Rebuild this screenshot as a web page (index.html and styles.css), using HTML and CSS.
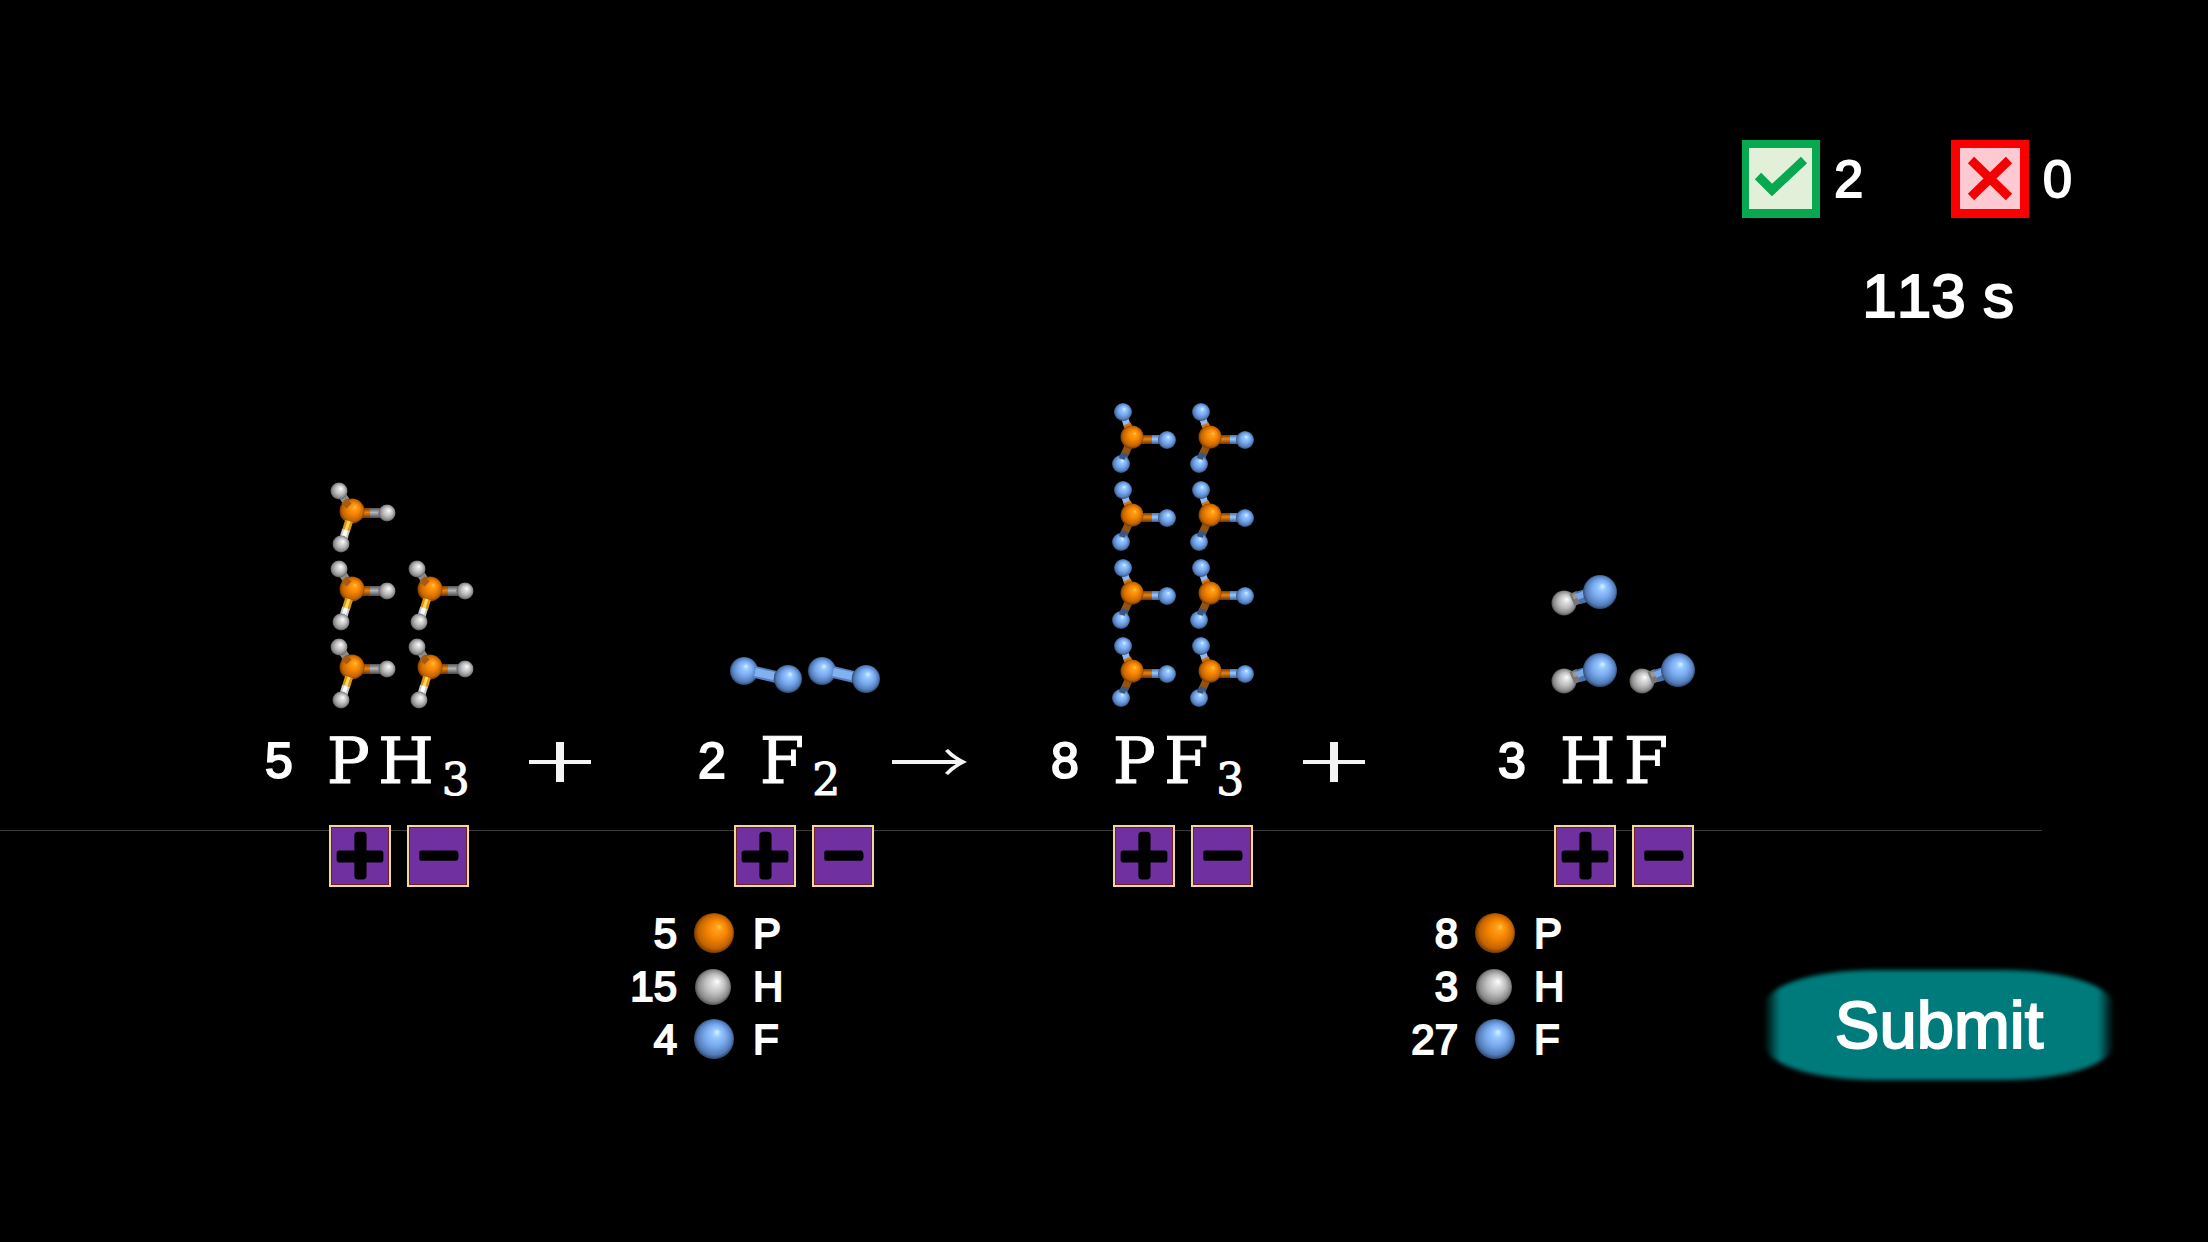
FILE: index.html
```html
<!DOCTYPE html>
<html lang="en">
<head>
<meta charset="utf-8">
<meta name="viewport" content="width=device-width, initial-scale=1">
<title>Balance the equation</title>
<link rel="stylesheet" href="styles.css">
</head>
<body>
<svg class="defs" aria-hidden="true">
  <defs>
    <radialGradient id="orange" cx="50%" cy="50%" r="54%" fx="64%" fy="34%">
      <stop offset="0" stop-color="#ffd24a"/><stop offset=".14" stop-color="#ffa01c"/><stop offset=".45" stop-color="#f58300"/><stop offset=".78" stop-color="#c26400"/><stop offset="1" stop-color="#5c2d00"/>
    </radialGradient>
    <radialGradient id="grey" cx="50%" cy="50%" r="54%" fx="62%" fy="34%">
      <stop offset="0" stop-color="#fff"/><stop offset=".2" stop-color="#e2e2e2"/><stop offset=".5" stop-color="#bebebe"/><stop offset=".8" stop-color="#8a8a8a"/><stop offset="1" stop-color="#3c3c3c"/>
    </radialGradient>
    <radialGradient id="blue" cx="50%" cy="50%" r="54%" fx="58%" fy="32%">
      <stop offset="0" stop-color="#d4f4ff"/><stop offset=".2" stop-color="#98c8ff"/><stop offset=".5" stop-color="#78a9ee"/><stop offset=".8" stop-color="#527cb8"/><stop offset="1" stop-color="#21344f"/>
    </radialGradient>
    <linearGradient id="rod-orange" x1="0" y1="0" x2="0" y2="1">
      <stop offset="0" stop-color="#7a3c00"/><stop offset=".45" stop-color="#e88312"/><stop offset="1" stop-color="#6b3400"/>
    </linearGradient>
    <linearGradient id="rod-grey" x1="0" y1="0" x2="0" y2="1">
      <stop offset="0" stop-color="#555"/><stop offset=".45" stop-color="#b5b5b5"/><stop offset="1" stop-color="#4a4a4a"/>
    </linearGradient>
    <linearGradient id="rod-blue" x1="0" y1="0" x2="0" y2="1">
      <stop offset="0" stop-color="#4a72ad"/><stop offset=".45" stop-color="#9ccbff"/><stop offset="1" stop-color="#3c5f95"/>
    </linearGradient>
    <symbol id="ph3" viewBox="0 0 78 78">
      <path d="M15 16L21 25" stroke="#8c8c8c" stroke-width="8"/>
      <rect x="36" y="32" width="13" height="10" fill="url(#rod-orange)"/>
      <rect x="45" y="32" width="14" height="10" fill="url(#rod-grey)"/>
      <circle cx="14" cy="15" r="8.5" fill="url(#grey)"/>
      <circle cx="27" cy="35" r="12.5" fill="url(#orange)"/>
      <path d="M19 25L24 30" stroke="#a85a10" stroke-width="7"/>
      <path d="M24 45L21 55" stroke="#dc9412" stroke-width="8"/>
      <path d="M24 45L21 54" stroke="#ffd75e" stroke-width="3"/>
      <path d="M21 54L18 64" stroke="#c9c9c9" stroke-width="8"/>
      <path d="M21 54L18 64" stroke="#fff" stroke-width="4"/>
      <circle cx="62" cy="37" r="8.5" fill="url(#grey)"/>
      <circle cx="16" cy="68" r="8.5" fill="url(#grey)"/>
    </symbol>
    <symbol id="pf3" viewBox="0 0 78 78">
      <path d="M16 21L18 27" stroke="#8fb9f0" stroke-width="7"/>
      <path d="M18 26L21 33" stroke="#d07414" stroke-width="8"/>
      <path d="M20 47L16 56" stroke="#94520f" stroke-width="8"/>
      <path d="M16 55L14 62" stroke="#3d567c" stroke-width="8"/>
      <rect x="32" y="37" width="12" height="9" fill="url(#rod-orange)"/>
      <rect x="43" y="37" width="10" height="9" fill="url(#rod-blue)"/>
      <circle cx="14" cy="14" r="9" fill="url(#blue)"/>
      <circle cx="23" cy="39" r="11.5" fill="url(#orange)"/>
      <circle cx="58" cy="42" r="9" fill="url(#blue)"/>
      <circle cx="12" cy="66" r="9" fill="url(#blue)"/>
      <path d="M14 57L13 61" stroke="#3d567c" stroke-width="6"/>
    </symbol>
    <symbol id="f2" viewBox="0 0 78 78">
      <circle cx="14" cy="39" r="14" fill="url(#blue)"/>
      <path d="M25 40L46 45" stroke="#5580bd" stroke-width="12"/>
      <path d="M25 40L44 44" stroke="#82b1f2" stroke-width="8"/>
      <circle cx="58" cy="47" r="14" fill="url(#blue)"/>
    </symbol>
    <symbol id="hf" viewBox="0 0 78 78">
      <circle cx="14" cy="49" r="12.5" fill="url(#grey)"/>
      <path d="M22 46L29 43" stroke="#777" stroke-width="13"/>
      <path d="M23 43L29 41" stroke="#999" stroke-width="5"/>
      <path d="M28 44L38 41" stroke="#4a73ad" stroke-width="13"/>
      <path d="M27 43L36 39" stroke="#78a8e8" stroke-width="6"/>
      <circle cx="50" cy="38" r="17" fill="url(#blue)"/>
    </symbol>
    <symbol id="plus" viewBox="0 0 62 62">
      <rect x="6" y="25" width="50" height="13" rx="3"/>
      <rect x="25" y="5" width="13" height="51" rx="4"/>
    </symbol>
    <symbol id="minus" viewBox="0 0 62 62">
      <path d="M13 25H50Q53 25 53 31Q53 36 50 36H13Q11 36 11 34V27Q11 25 13 25Z"/>
    </symbol>
    <symbol id="op-plus" viewBox="0 0 62 40">
      <rect x="0" y="18" width="62" height="4"/><rect x="27" y="0" width="8" height="40"/>
    </symbol>
    <symbol id="op-arrow" viewBox="0 0 76 40">
      <path d="M0 18H64Q57 14 53 9L56 7Q64 15 75 20Q64 25 56 33L53 31Q57 26 64 22H0Z"/>
    </symbol>
  </defs>
</svg>

<main class="game">
  <header class="status">
    <div class="score">
      <span class="tally">
        <svg class="mark" viewBox="0 0 78 78" role="img" aria-label="Correct">
          <rect width="78" height="78" fill="#07a850"/><rect x="7" y="8" width="63" height="61" fill="#e2f0da"/>
          <path d="M16 36L30 50L62 20" fill="none" stroke="#07a850" stroke-width="9"/>
        </svg>
        <output>2</output>
      </span>
      <span class="tally">
        <svg class="mark" viewBox="0 0 78 78" role="img" aria-label="Wrong">
          <rect width="78" height="78" fill="#fa0000"/><rect x="9" y="8" width="60" height="61" fill="#ffc9d1"/>
          <path d="M20 20L58 57M58 20L20 57" stroke="#f50000" stroke-width="9"/>
        </svg>
        <output>0</output>
      </span>
    </div>
    <time class="timer" datetime="PT113S">113 s</time>
  </header>

  <section class="equation" aria-label="Chemical equation">
    <hr class="rule">

    <div class="term term-ph3">
      <div class="stack">
        <svg><use href="#ph3"/></svg><svg><use href="#ph3"/></svg><svg><use href="#ph3"/></svg><svg><use href="#ph3"/></svg><svg><use href="#ph3"/></svg>
      </div>
      <div class="label"><output class="coef">5</output><span class="formula"><span>P</span><span>H</span><sub>3</sub></span></div>
      <div class="controls">
        <button type="button" aria-label="Add PH3"><svg><use href="#plus"/></svg></button>
        <button type="button" aria-label="Remove PH3"><svg><use href="#minus"/></svg></button>
      </div>
    </div>

    <svg class="operator op-plus-1" role="img" aria-label="plus" viewBox="0 0 62 40"><use href="#op-plus"/></svg>

    <div class="term term-f2">
      <div class="stack">
        <svg><use href="#f2"/></svg><svg><use href="#f2"/></svg>
      </div>
      <div class="label"><output class="coef">2</output><span class="formula"><span>F</span><sub>2</sub></span></div>
      <div class="controls">
        <button type="button" aria-label="Add F2"><svg><use href="#plus"/></svg></button>
        <button type="button" aria-label="Remove F2"><svg><use href="#minus"/></svg></button>
      </div>
    </div>

    <svg class="operator op-yields" role="img" aria-label="yields" viewBox="0 0 76 40"><use href="#op-arrow"/></svg>

    <div class="term term-pf3">
      <div class="stack">
        <svg><use href="#pf3"/></svg><svg><use href="#pf3"/></svg><svg><use href="#pf3"/></svg><svg><use href="#pf3"/></svg><svg><use href="#pf3"/></svg><svg><use href="#pf3"/></svg><svg><use href="#pf3"/></svg><svg><use href="#pf3"/></svg>
      </div>
      <div class="label"><output class="coef">8</output><span class="formula"><span>P</span><span>F</span><sub>3</sub></span></div>
      <div class="controls">
        <button type="button" aria-label="Add PF3"><svg><use href="#plus"/></svg></button>
        <button type="button" aria-label="Remove PF3"><svg><use href="#minus"/></svg></button>
      </div>
    </div>

    <svg class="operator op-plus-2" role="img" aria-label="plus" viewBox="0 0 62 40"><use href="#op-plus"/></svg>

    <div class="term term-hf">
      <div class="stack">
        <svg><use href="#hf"/></svg><svg><use href="#hf"/></svg><svg><use href="#hf"/></svg>
      </div>
      <div class="label"><output class="coef">3</output><span class="formula"><span>H</span><span>F</span></span></div>
      <div class="controls">
        <button type="button" aria-label="Add HF"><svg><use href="#plus"/></svg></button>
        <button type="button" aria-label="Remove HF"><svg><use href="#minus"/></svg></button>
      </div>
    </div>
  </section>

  <section class="summary">
    <table class="atoms atoms-left" aria-label="Reactant atoms">
      <tr><td>5</td><td><svg viewBox="0 0 42 42"><circle cx="21" cy="20" r="20" fill="url(#orange)"/></svg></td><th scope="row">P</th></tr>
      <tr><td>15</td><td><svg viewBox="0 0 42 42"><circle cx="20" cy="21" r="18" fill="url(#grey)"/></svg></td><th scope="row">H</th></tr>
      <tr><td>4</td><td><svg viewBox="0 0 42 42"><circle cx="21" cy="20" r="20" fill="url(#blue)"/></svg></td><th scope="row">F</th></tr>
    </table>
    <table class="atoms atoms-right" aria-label="Product atoms">
      <tr><td>8</td><td><svg viewBox="0 0 42 42"><circle cx="21" cy="20" r="20" fill="url(#orange)"/></svg></td><th scope="row">P</th></tr>
      <tr><td>3</td><td><svg viewBox="0 0 42 42"><circle cx="20" cy="21" r="18" fill="url(#grey)"/></svg></td><th scope="row">H</th></tr>
      <tr><td>27</td><td><svg viewBox="0 0 42 42"><circle cx="21" cy="20" r="20" fill="url(#blue)"/></svg></td><th scope="row">F</th></tr>
    </table>
    <button type="submit" class="submit"><span>Submit</span></button>
  </section>
</main>
</body>
</html>
```
FILE: styles.css
```css
* { box-sizing: border-box; }

body {
  margin: 0;
  min-height: 100vh;
  background: #000;
  color: #fff;
  font-family: "Liberation Sans", Arial, sans-serif;
  font-kerning: none;
  -webkit-text-stroke: 2px #fff;
}

svg { display: block; }

.defs { position: absolute; width: 0; height: 0; }

.game { padding-top: 140px; }

/* Score and timer */
.status {
  display: flex;
  flex-direction: column;
  align-items: flex-end;
  gap: 42px;
  padding-right: 136px;
  height: 258px;
}

.score { display: flex; gap: 88px; }

.tally {
  display: flex;
  align-items: center;
  gap: 14px;
  font-size: 52px;
  line-height: 78px;
}

.mark { width: 78px; height: 78px; }

.timer {
  margin-right: 58px;
  font-size: 62px;
  line-height: 72px;
}

/* Equation */
.equation {
  display: grid;
  grid-template-columns: 265fr 264fr 169fr 194fr 159fr 252fr 195fr 710fr;
  align-items: end;
}

.rule {
  grid-area: 1 / 1 / 2 / -1;
  width: calc(100% - 166px);
  height: 1px;
  margin: 0 0 56px;
  border: 0;
  background: #3a3a3a;
}

.term { --indent: 60px; grid-row: 1; }
.term-ph3 { grid-column: 2; }
.term-f2 { --indent: 32px; grid-column: 4; }
.term-pf3 { --indent: 58px; grid-column: 6; }
.term-hf { --indent: 52px; grid-column: 8; }

.stack {
  display: flex;
  flex-wrap: wrap-reverse;
  align-content: flex-start;
  width: calc(156px + var(--indent));
  min-height: 312px;
  padding-left: var(--indent);
}

.stack svg { width: 78px; height: 78px; }

.label {
  display: flex;
  align-items: center;
  gap: 34px;
  height: 115px;
  padding-bottom: 14px;
}

.coef { font-size: 50px; line-height: 60px; }

.formula {
  display: flex;
  align-items: baseline;
  gap: 8px;
  font-family: "DejaVu Serif", serif;
  font-size: 64px;
  line-height: 60px;
  -webkit-text-stroke: 1px #fff;
}

.formula sub {
  position: relative;
  top: 12px;
  font-size: 44px;
  line-height: 42px;
  vertical-align: baseline;
}

.controls {
  display: flex;
  gap: 16px;
  padding-left: var(--indent);
  margin-left: 4px;
}

.controls button {
  width: 62px;
  height: 62px;
  padding: 0;
  border: 2px solid #f0d79a;
  background: #7030a0;
  box-shadow: inset 0 0 0 1px #6e1f2c;
}

.controls svg { width: 58px; height: 58px; fill: #000; }

.operator {
  grid-row: 1;
  height: 40px;
  margin-bottom: 105px;
  fill: #f4f4f4;
}

.op-plus-1 { grid-column: 3; width: 62px; }
.op-yields { grid-column: 5; width: 76px; }
.op-plus-2 { grid-column: 7; width: 62px; }

/* Atom totals and submit */
.summary {
  display: grid;
  grid-template-columns: 621fr 781fr 362fr 444fr;
  align-items: start;
  padding-top: 20px;
}

.atoms {
  border-collapse: collapse;
  font-size: 42px;
  line-height: 53px;
  width: 168px;
}

.atoms-left { grid-column: 2; }
.atoms-right { grid-column: 3; }
.atoms td, .atoms th { padding: 0; height: 53px; font-weight: 400; }
.atoms td:first-child { width: 56px; text-align: right; }
.atoms td:nth-child(2) { padding-left: 16px; width: 76px; }
.atoms th { text-align: left; }
.atoms svg { width: 42px; height: 42px; }

.submit {
  grid-column: 4;
  position: relative;
  width: 350px;
  height: 110px;
  margin-top: 63px;
  padding: 0;
  border: 0;
  background: none;
  color: #fff;
  font: 67px/110px "Liberation Sans", Arial, sans-serif;
  -webkit-text-stroke: 2px #fff;
}

.submit::before {
  content: "";
  position: absolute;
  inset: 0;
  border-radius: 110px / 36px;
  background: linear-gradient(90deg, transparent, #007b7b 16px, #007b7b calc(100% - 16px), transparent);
  filter: blur(2px);
}

.submit span { position: relative; }
```
